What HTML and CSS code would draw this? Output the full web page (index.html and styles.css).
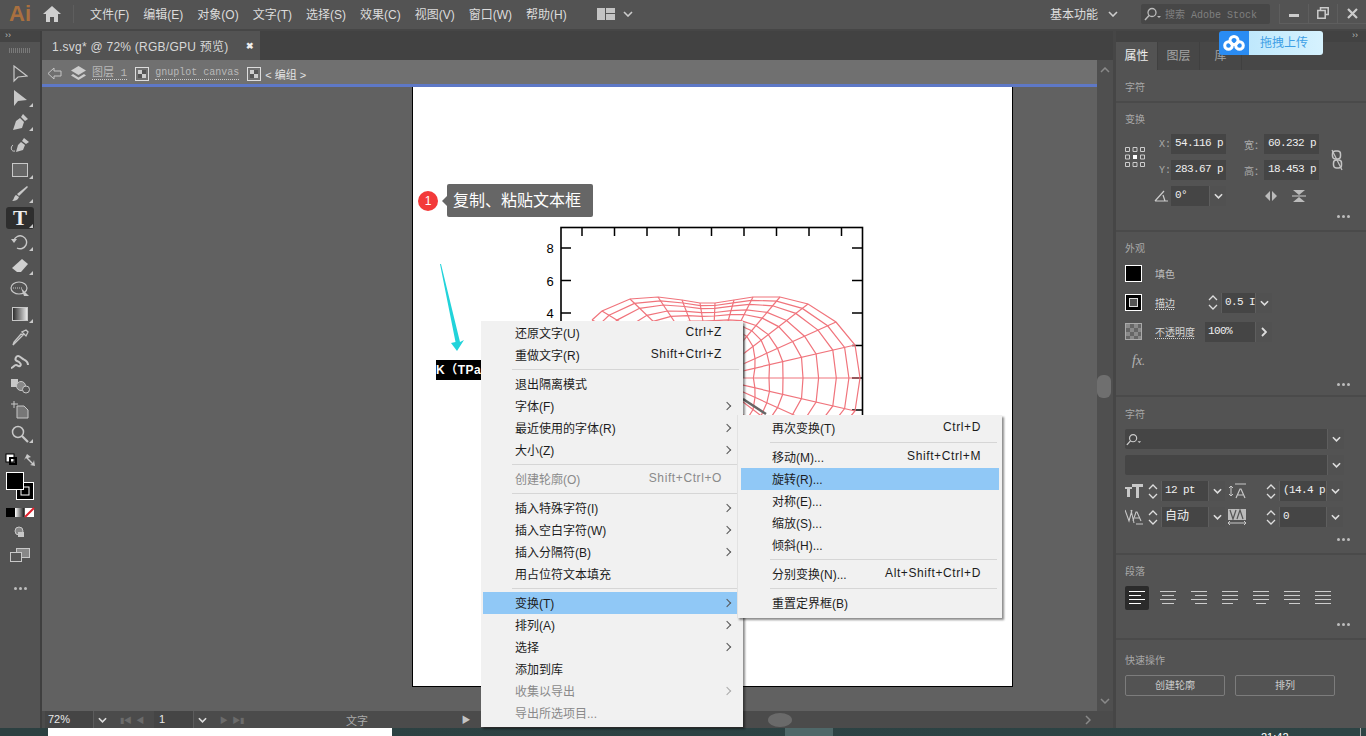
FILE: index.html
```html
<!DOCTYPE html>
<html>
<head>
	<title>Ai</title>
	<meta charset="utf-8">
	<link rel="stylesheet" href="styles.css">
</head>
<body>
	<div class="topbar">
		<span class="logo">Ai</span>
		<svg class="home" width="18" height="16" viewBox="0 0 18 16"><path d="M9 0 0 8h3v8h4v-5h4v5h4V8h3z" fill="#d0d0d0"/></svg>
		<i class="vline"></i>
		<ul class="menus">
			<li>文件(F)</li><li>编辑(E)</li><li>对象(O)</li><li>文字(T)</li><li>选择(S)</li><li>效果(C)</li><li>视图(V)</li><li>窗口(W)</li><li>帮助(H)</li>
		</ul>
		<svg class="layout" width="18" height="12" viewBox="0 0 18 12"><path d="M0 0h8v12H0zM9 0h9v5H9zM9 6h9v6H9z" fill="#c4c4c4"/></svg>
		<svg class="chev" width="10" height="6" viewBox="0 0 10 6"><path d="M1 1l4 4 4-4" fill="none" stroke="#ccc" stroke-width="1.6"/></svg>
		<span class="spring"></span>
		<span class="workspace">基本功能</span>
		<svg class="chev" width="10" height="6" viewBox="0 0 10 6"><path d="M1 1l4 4 4-4" fill="none" stroke="#ccc" stroke-width="1.6"/></svg>
		<div class="stock">
			<svg width="18" height="14" viewBox="0 0 18 14"><circle cx="8" cy="5.500" r="4" fill="none" stroke="#bbb" stroke-width="1.300"/><path d="M5 8.500 1 13" stroke="#bbb" stroke-width="1.500"/><path d="M13 9h4l-2 2z" fill="#bbb"/></svg>
			<span>搜索 Adobe Stock</span>
		</div>
		<div class="winbtns">
			<span><i class="win-min"></i></span>
			<span><svg width="12" height="12" viewBox="0 0 12 12"><path d="M3.500 3V.8h7.700v6.700H8.500M.8 3.500h7.400v7.700H.8z" fill="none" stroke="#ccc" stroke-width="1.500"/></svg></span>
			<span><svg width="11" height="11" viewBox="0 0 11 11"><path d="M1 1l9 9M10 1l-9 9" stroke="#ccc" stroke-width="2.200"/></svg></span>
		</div>
	</div>

	<div class="work">
		<div class="tools">
			<div class="tools-head">››</div>
			<div class="grip"></div>
			<div class="tool"><svg width="16" height="18" viewBox="0 0 16 18"><path d="M2 1v15l4-4 9-1z" fill="none" stroke="#c8c8c8" stroke-width="1.200"/></svg></div>
			<div class="tool more"><svg width="16" height="18" viewBox="0 0 16 18"><path d="M2 1v16l4-5 9-1z" fill="#c8c8c8"/></svg></div>
			<div class="tool more"><svg width="18" height="18" viewBox="0 0 18 18"><path d="M12 1l5 5-3 2-4-4zM9 5l4 4-2 6-9 2 3-9z" fill="#c8c8c8"/></svg></div>
			<div class="tool"><svg width="20" height="18" viewBox="0 0 20 18"><path d="M14 1l5 4-3 2-4-3zM11 5l4 3-2 5-7 2 2-7z" fill="#c8c8c8"/><path d="M5 14C1 15 0 10 3 8" fill="none" stroke="#c8c8c8"/></svg></div>
			<div class="tool more"><svg width="16" height="14" viewBox="0 0 16 14"><rect x=".5" y=".5" width="15" height="13" fill="#666" stroke="#c8c8c8"/></svg></div>
			<div class="tool more"><svg width="18" height="18" viewBox="0 0 18 18"><path d="M16 1 17 2 8 11 6 9zM5 10l3 2c-1 3-4 4-7 4 2-1 2-5 4-6z" fill="#c8c8c8"/></svg></div>
			<div class="tool active more"><span class="t">T</span></div>
			<div class="tool more"><svg width="18" height="16" viewBox="0 0 18 16"><path d="M3 6a6.500 6.500 0 1 1 3 8" fill="none" stroke="#c8c8c8" stroke-width="1.400"/><path d="M0 5h6L3 9z" fill="#c8c8c8"/></svg></div>
			<div class="tool more"><svg width="18" height="16" viewBox="0 0 18 16"><path d="M11 1l6 5-7 8H6L1 10z" fill="#d0d0d0"/></svg></div>
			<div class="tool"><svg width="20" height="18" viewBox="0 0 20 18"><ellipse cx="9" cy="7" rx="8" ry="6" fill="none" stroke="#c8c8c8" stroke-width="1.200"/><path d="M3 7h9" stroke="#c8c8c8" stroke-dasharray="1 1"/><path d="M11 7l8 8-5 0z" fill="#c8c8c8"/></svg></div>
			<div class="tool more"><span class="grad"></span></div>
			<div class="tool"><svg width="18" height="18" viewBox="0 0 18 18"><path d="M12 6 4 14l-2 2 1-3 7-8zM11 3l4 4 2-4-2-2z" fill="none" stroke="#c8c8c8" stroke-width="1.300"/></svg></div>
			<div class="tool"><svg width="20" height="14" viewBox="0 0 20 14"><path d="M1 13c2 0 3-3 5-3s2 2 4 1 0-4-3-5-1-5 1-5 3 2 5 3 5 2 5 6" fill="none" stroke="#c8c8c8" stroke-width="2"/></svg></div>
			<div class="tool"><svg width="19" height="15" viewBox="0 0 19 15"><rect x="0" y="0" width="7" height="8" fill="#c8c8c8"/><circle cx="10" cy="7" r="4.500" fill="#888" stroke="#c8c8c8"/><circle cx="15" cy="10.500" r="3.500" fill="#555" stroke="#c8c8c8"/></svg></div>
			<div class="tool"><svg width="18" height="18" viewBox="0 0 18 18"><path d="M6 5h7l4 4v8H6z" fill="#777" stroke="#c8c8c8"/><path d="M3 0v7M0 3h7" stroke="#c8c8c8"/></svg></div>
			<div class="tool more"><svg width="18" height="18" viewBox="0 0 18 18"><circle cx="7" cy="7" r="5.500" fill="none" stroke="#c8c8c8" stroke-width="1.500"/><path d="M11 11l6 6" stroke="#c8c8c8" stroke-width="2.200"/></svg></div>
			<svg class="colors" width="40" height="94" viewBox="0 0 40 94">
				<rect x="6" y="1" width="8" height="8" fill="#fff" stroke="#000"/><rect x="10" y="5" width="6" height="6" fill="none" stroke="#000" stroke-width="2"/>
				<path d="M27 1l4 3-3 1 5 5 1-3 1 6-5-1 2-1-6-6-2 2z" fill="#c8c8c8"/>
				<rect x="16.500" y="29.500" width="17" height="17" fill="#000" stroke="#fff"/><rect x="21" y="34" width="8" height="8" fill="none" stroke="#fff"/>
				<rect x="6.500" y="19.500" width="17" height="17" fill="#000" stroke="#fff"/>
				<rect x="6" y="55" width="9" height="9" fill="#000"/><rect x="15" y="55" width="9" height="9" fill="url(#bw)"/><rect x="25" y="55" width="9" height="9" fill="#fff"/><path d="M25 64l9-9" stroke="#e0202c" stroke-width="2"/>
				<defs><linearGradient id="bw"><stop offset="0" stop-color="#fff"/><stop offset="1" stop-color="#222"/></linearGradient></defs>
				<circle cx="19" cy="78" r="4" fill="#888" stroke="#c8c8c8"/><rect x="18" y="79" width="6" height="5" fill="#c8c8c8"/>
			</svg>
			<svg class="screen" width="20" height="14" viewBox="0 0 20 14"><rect x="6.500" y=".5" width="13" height="9" fill="#888" stroke="#c8c8c8"/><rect x=".5" y="4.500" width="11" height="9" fill="#555" stroke="#c8c8c8"/></svg>
			<div class="dots tool-dots"><i></i><i></i><i></i></div>
		</div>

		<div class="center">
			<div class="tabstrip">
				<div class="doctab"><span>1.svg* @ 72% (RGB/GPU 预览)</span><b>✖</b></div>
			</div>
			<div class="crumbs">
				<svg class="back" width="15" height="13" viewBox="0 0 15 13"><path d="M7 1 1 6.500 7 12V9h7V4H7z" fill="none" stroke="#c4c4c4"/></svg>
				<svg class="layers" width="15" height="15" viewBox="0 0 15 15"><path d="M7.500 0 15 4.500 7.500 9 0 4.500z" fill="#ccc"/><path d="M2 8 0 9.500 7.500 14 15 9.500 13 8l-5.500 3.500z" fill="#ccc"/></svg>
				<span class="dotted layer-name">图层 1</span>
				<i class="thumb"></i>
				<span class="dotted mono">gnuplot canvas</span>
				<i class="thumb"></i>
				<span class="group">&lt; 编组 &gt;</span>
			</div>
			<div class="bluebar"></div>
			<div class="mid">
				<div class="canvas">
					<div class="artboard">
						<svg class="art" width="599" height="599" viewBox="413 87 599 599">
							<path d="M440 264 441 264 460 342 464 340 457 351 451 343 455.500 342z" fill="#22d3da"/>
							<rect x="561" y="227.500" width="301.500" height="340" fill="none" stroke="#000" stroke-width="1.600"/>
							<g id="ticks" stroke="#000" stroke-width="1.500">
								<path d="M582 227v9M614.500 227v9M647 227v9M679 227v9M711.500 227v9M744 227v9M776.500 227v9M809 227v9M841.500 227v9"/>
								<path d="M561 248h10M561 280.500h10M561 313h10M561 345.500h10M561 378h10M852 248h10M852 280.500h10M852 313h10M852 345.500h10M852 378h10M852 410h10"/>
							</g>
							<g class="axis">
								<text x="550" y="253">8</text>
								<text x="550" y="285.500">6</text>
								<text x="550" y="318">4</text>
							</g>
							<g id="mesh" fill="none" stroke="#f0747c" stroke-width="1.200"></g>
							<path d="M743.500 326v52" stroke="#999" stroke-width="2" opacity=".8"/>
							<path d="M743 399 766 414" stroke="#666" stroke-width="2.500"/>
						</svg>
						<div class="callout">
							<span class="num">1</span>
							<span class="tip">复制、粘贴文本框</span>
						</div>
						<div class="seltext">K（TPa）</div>
					</div>
				</div>
				<div class="vscroll">
					<svg width="10" height="6" viewBox="0 0 10 6"><path d="M1 5l4-4 4 4" fill="none" stroke="#8a8a8a" stroke-width="1.500"/></svg>
					<i class="vthumb"></i>
					<svg width="10" height="6" viewBox="0 0 10 6"><path d="M1 1l4 4 4-4" fill="none" stroke="#8a8a8a" stroke-width="1.500"/></svg>
				</div>
			</div>
			<div class="status">
				<span class="zoomval">72%</span>
				<span class="dd"><svg width="9" height="6" viewBox="0 0 10 6"><path d="M1 1l4 4 4-4" fill="none" stroke="#ddd" stroke-width="1.800"/></svg></span>
				<span class="nav">▮◀ &nbsp;◀</span>
				<span class="pageval">1</span>
				<span class="dd"><svg width="9" height="6" viewBox="0 0 10 6"><path d="M1 1l4 4 4-4" fill="none" stroke="#ddd" stroke-width="1.800"/></svg></span>
				<span class="nav">▶ &nbsp;▶▮</span>
				<span class="mode">文字</span>
				<span class="play">▶</span>
				<span class="hscroll"><i class="hthumb"></i></span>
				<svg class="hnext" width="6" height="10" viewBox="0 0 6 10"><path d="M1 1l4 4-4 4" fill="none" stroke="#8a8a8a" stroke-width="1.500"/></svg>
			</div>
		</div>

		<div class="panel">
			<div class="panel-head">››</div>
			<div class="panel-tabs">
				<span class="on">属性</span><span>图层</span><span>库</span>
			</div>
			<section class="sec s-title"><h4>字符</h4></section>
			<section class="sec s-transform">
				<h4>变换</h4>
				<div class="tf-grid">
					<svg class="refpoint" width="20" height="20" viewBox="0 0 20 20"><g fill="none" stroke="#ccc"><path d="M.5.5h4v4h-4zM8 .5h4v4H8zM15.500.5h4v4h-4zM.5 8h4v4h-4zM15.500 8h4v4h-4zM.5 15.500h4v4h-4zM8 15.500h4v4H8zM15.500 15.500h4v4h-4z"/></g><rect x="8" y="8" width="4" height="4" fill="#fff"/></svg>
					<div class="tf-fields">
						<label>X:</label><span class="num-field">54.116 p</span>
						<label class="cjk">宽：</label><span class="num-field">60.232 p</span>
						<svg class="link" width="16" height="22" viewBox="0 0 16 22"><path d="M3 1l10 20" stroke="#c4c4c4" stroke-width="1.200"/><rect x="3.500" y="2" width="8" height="8" rx="3" fill="none" stroke="#c4c4c4" stroke-width="1.500"/><rect x="4.500" y="11" width="8" height="8" rx="3" fill="none" stroke="#c4c4c4" stroke-width="1.500"/></svg>
						<label>Y:</label><span class="num-field">283.67 p</span>
						<label class="cjk">高：</label><span class="num-field">18.453 p</span>
						<svg class="angle" width="15" height="12" viewBox="0 0 15 12"><path d="M1 11h13M1 11 10 1M9 5l2 6" fill="none" stroke="#ccc" stroke-width="1.200"/></svg>
						<span class="num-field combo">0°<b class="ddb"><svg width="9" height="6" viewBox="0 0 10 6"><path d="M1 1l4 4 4-4" fill="none" stroke="#ddd" stroke-width="1.800"/></svg></b></span>
						<span></span>
						<div class="flips">
							<svg width="14" height="12" viewBox="0 0 14 12"><path d="M6 1 1 6l5 5zM8 1l5 5-5 5z" fill="#bbb"/></svg>
							<svg width="14" height="14" viewBox="0 0 14 14"><path d="M1 1h12L7 6zM1 13h12L7 8z" fill="#bbb"/><path d="M0 7h14" stroke="#ccc"/></svg>
						</div>
					</div>
				</div>
				<div class="dots"><i></i><i></i><i></i></div>
			</section>
			<section class="sec s-look">
				<h4>外观</h4>
				<div class="look-row">
					<i class="swatch"></i><span class="lbl">填色</span>
				</div>
				<div class="look-row">
					<i class="swatch stroke"><i></i></i><span class="lbl under">描边</span>
					<span class="ctrl"><b class="step"><svg width="10" height="15" viewBox="0 0 10 15"><path d="M1 5l4-4 4 4M1 10l4 4 4-4" fill="none" stroke="#ddd" stroke-width="1.300"/></svg></b><span class="val w33">0.5 I</span><b class="ddb"><svg width="9" height="6" viewBox="0 0 10 6"><path d="M1 1l4 4 4-4" fill="none" stroke="#ddd" stroke-width="1.800"/></svg></b></span>
				</div>
				<div class="look-row">
					<i class="swatch opac"></i><span class="lbl under">不透明度</span>
					<span class="ctrl opac-ctrl"><span class="val w50">100%</span><b class="ddb"><svg width="6" height="10" viewBox="0 0 6 10"><path d="M1 1l4 4-4 4" fill="none" stroke="#ddd" stroke-width="1.800"/></svg></b></span>
				</div>
				<div class="fx">fx<small>.</small></div>
				<div class="dots"><i></i><i></i><i></i></div>
			</section>
			<section class="sec s-char">
				<h4>字符</h4>
				<div class="sel"><svg width="16" height="13" viewBox="0 0 18 14"><circle cx="8" cy="5.500" r="4" fill="none" stroke="#ccc" stroke-width="1.300"/><path d="M5 8.500 1 13" stroke="#ccc" stroke-width="1.500"/><path d="M13 9h4l-2 2z" fill="#ccc"/></svg><b class="ddb"><svg width="9" height="6" viewBox="0 0 10 6"><path d="M1 1l4 4 4-4" fill="none" stroke="#ddd" stroke-width="1.800"/></svg></b></div>
				<div class="sel"><b class="ddb"><svg width="9" height="6" viewBox="0 0 10 6"><path d="M1 1l4 4 4-4" fill="none" stroke="#ddd" stroke-width="1.800"/></svg></b></div>
				<div class="char-grid">
					<svg width="18" height="16" viewBox="0 0 18 16"><path d="M0 4h7v2H5v8H2V6H0zM7 1h11v3h-4v11h-3V4H7z" fill="#c8c8c8"/></svg>
					<span class="ctrl"><b class="step"><svg width="10" height="15" viewBox="0 0 10 15"><path d="M1 5l4-4 4 4M1 10l4 4 4-4" fill="none" stroke="#ddd" stroke-width="1.300"/></svg></b><span class="val w46">12 pt</span><b class="ddb"><svg width="9" height="6" viewBox="0 0 10 6"><path d="M1 1l4 4 4-4" fill="none" stroke="#ddd" stroke-width="1.800"/></svg></b></span>
					<svg width="18" height="18" viewBox="0 0 18 18"><path d="M8 16l4-9h1l4 9M10 13h5" fill="none" stroke="#c8c8c8" stroke-width="1.200"/><path d="M7 2h11M3 4v10M1 6l2-2 2 2M1 12l2 2 2-2" fill="none" stroke="#c8c8c8"/></svg>
					<span class="ctrl"><b class="step"><svg width="10" height="15" viewBox="0 0 10 15"><path d="M1 5l4-4 4 4M1 10l4 4 4-4" fill="none" stroke="#ddd" stroke-width="1.300"/></svg></b><span class="val w46">(14.4 p</span><b class="ddb"><svg width="9" height="6" viewBox="0 0 10 6"><path d="M1 1l4 4 4-4" fill="none" stroke="#ddd" stroke-width="1.800"/></svg></b></span>
					<svg width="18" height="17" viewBox="0 0 18 17"><path d="M0 1l4 11 3-11M9 14 6 1M8 12l3-9h1l4 9M10 9h5" fill="none" stroke="#c8c8c8" stroke-width="1.100"/><path d="M11 15h7" stroke="#c8c8c8"/></svg>
					<span class="ctrl"><b class="step"><svg width="10" height="15" viewBox="0 0 10 15"><path d="M1 5l4-4 4 4M1 10l4 4 4-4" fill="none" stroke="#ddd" stroke-width="1.300"/></svg></b><span class="val w46 cjkval">自动</span><b class="ddb"><svg width="9" height="6" viewBox="0 0 10 6"><path d="M1 1l4 4 4-4" fill="none" stroke="#ddd" stroke-width="1.800"/></svg></b></span>
					<svg width="18" height="17" viewBox="0 0 18 17"><rect width="18" height="11" fill="#bbb"/><path d="M2 1l3 9 3-9M9 10l3-9 3 9" fill="none" stroke="#555" stroke-width="1.200"/><path d="M0 14h18M0 14l2-2M0 14l2 2M18 14l-2-2M18 14l-2 2" fill="none" stroke="#c8c8c8"/></svg>
					<span class="ctrl"><b class="step"><svg width="10" height="15" viewBox="0 0 10 15"><path d="M1 5l4-4 4 4M1 10l4 4 4-4" fill="none" stroke="#ddd" stroke-width="1.300"/></svg></b><span class="val w46">0</span><b class="ddb"><svg width="9" height="6" viewBox="0 0 10 6"><path d="M1 1l4 4 4-4" fill="none" stroke="#ddd" stroke-width="1.800"/></svg></b></span>
				</div>
				<div class="dots"><i></i><i></i><i></i></div>
			</section>
			<section class="sec s-para">
				<h4>段落</h4>
				<div class="aligns">
					<span class="on"><svg width="16" height="14" viewBox="0 0 16 14"><path d="M0 .5h16M0 4.500h12M0 8.500h16M0 12.500h12" stroke="#fff"/></svg></span>
					<span><svg width="16" height="14" viewBox="0 0 16 14"><path d="M0 .5h16M2 4.500h12M0 8.500h16M2 12.500h12" stroke="#ccc"/></svg></span>
					<span><svg width="16" height="14" viewBox="0 0 16 14"><path d="M0 .5h16M4 4.500h12M0 8.500h16M4 12.500h12" stroke="#ccc"/></svg></span>
					<span><svg width="16" height="14" viewBox="0 0 16 14"><path d="M0 .5h16M0 4.500h16M0 8.500h16M0 12.500h11" stroke="#ccc"/></svg></span>
					<span><svg width="16" height="14" viewBox="0 0 16 14"><path d="M0 .5h16M0 4.500h16M0 8.500h16M3 12.500h10" stroke="#ccc"/></svg></span>
					<span><svg width="16" height="14" viewBox="0 0 16 14"><path d="M0 .5h16M0 4.500h16M0 8.500h16M5 12.500h11" stroke="#ccc"/></svg></span>
					<span><svg width="16" height="14" viewBox="0 0 16 14"><path d="M0 .5h16M0 4.500h16M0 8.500h16M0 12.500h16" stroke="#ccc"/></svg></span>
				</div>
				<div class="dots"><i></i><i></i><i></i></div>
			</section>
			<section class="sec s-quick">
				<h4>快速操作</h4>
				<div class="quick-btns">
					<span>创建轮廓</span><span>排列</span>
				</div>
			</section>
		</div>
	</div>

	<div class="taskbar">
		<i class="tb-white"></i>
		<i class="tb-active"></i>
		<span class="clock">21:42</span>
		<i class="tb-end"></i>
	</div>

	<div class="upload">
		<span class="up-ico"><svg width="22" height="16" viewBox="0 0 22 16"><g fill="none" stroke="#fff" stroke-width="3"><circle cx="11" cy="5.500" r="4"/><circle cx="5.500" cy="10.500" r="3.800"/><circle cx="16.500" cy="10.500" r="3.800"/></g></svg></span>
		<span class="up-txt">拖拽上传</span>
	</div>

	<div class="ctx main-menu">
		<div class="row"><span>还原文字(U)</span><em>Ctrl+Z</em></div>
		<div class="row"><span>重做文字(R)</span><em>Shift+Ctrl+Z</em></div>
		<hr>
		<div class="row"><span>退出隔离模式</span></div>
		<div class="row sub"><span>字体(F)</span></div>
		<div class="row sub"><span>最近使用的字体(R)</span></div>
		<div class="row sub"><span>大小(Z)</span></div>
		<hr>
		<div class="row off"><span>创建轮廓(O)</span><em>Shift+Ctrl+O</em></div>
		<hr>
		<div class="row sub"><span>插入特殊字符(I)</span></div>
		<div class="row sub"><span>插入空白字符(W)</span></div>
		<div class="row sub"><span>插入分隔符(B)</span></div>
		<div class="row"><span>用占位符文本填充</span></div>
		<hr>
		<div class="row sub hi"><span>变换(T)</span></div>
		<div class="row sub"><span>排列(A)</span></div>
		<div class="row sub"><span>选择</span></div>
		<div class="row"><span>添加到库</span></div>
		<div class="row sub off"><span>收集以导出</span></div>
		<div class="row off"><span>导出所选项目...</span></div>
	</div>

	<div class="ctx sub-menu">
		<div class="row"><span>再次变换(T)</span><em>Ctrl+D</em></div>
		<hr>
		<div class="row"><span>移动(M)...</span><em>Shift+Ctrl+M</em></div>
		<div class="row hi"><span>旋转(R)...</span></div>
		<div class="row"><span>对称(E)...</span></div>
		<div class="row"><span>缩放(S)...</span></div>
		<div class="row"><span>倾斜(H)...</span></div>
		<hr>
		<div class="row"><span>分别变换(N)...</span><em>Alt+Shift+Ctrl+D</em></div>
		<hr>
		<div class="row"><span>重置定界框(B)</span></div>
	</div>

	<script src="mesh.js"></script>
</body>
</html>
```

FILE: styles.css
```css
*{
	margin:0;
	padding:0;
	box-sizing:border-box;
}
body{
	width:1366px;
	height:736px;
	overflow:hidden;
	display:flex;
	flex-direction:column;
	position:relative;
	background:#535353;
	font-family:"Liberation Sans","Noto Sans CJK SC",sans-serif;
	font-size:12px;
	color:#ddd;
}
i,em{
	font-style:normal;
}
ul{
	list-style:none;
}

/* top bar */
.topbar{
	height:31px;
	flex:none;
	display:flex;
	align-items:center;
	background:#535353;
	border-bottom:2px solid #464646;
	padding-bottom:2px;
}
.logo{
	width:27px;
	margin-left:9px;
	font-size:22px;
	font-weight:bold;
	color:#a9703f;
}
.home{
	margin-left:7px;
}
.vline{
	width:1px;
	height:18px;
	margin:0 16px 0 12px;
	background:#5e5e5e;
}
.menus{
	display:flex;
	gap:14px;
	color:#dcdcdc;
}
.layout{
	margin-left:30px;
}
.topbar .chev{
	margin-left:8px;
}
.spring{
	flex:1;
}
.workspace{
	color:#ddd;
}
.topbar .workspace + .chev{
	margin-left:10px;
}
.stock{
	width:129px;
	height:20px;
	margin-left:23px;
	display:flex;
	align-items:center;
	gap:3px;
	padding-left:3px;
	background:#474747;
	border-radius:2px;
	font-family:"Liberation Mono","Noto Sans CJK SC",monospace;
	font-size:10px;
	color:#808080;
}
.winbtns{
	display:flex;
	margin-left:9px;
	width:87px;
}
.winbtns span{
	flex:1;
	height:20px;
	display:flex;
	align-items:center;
	justify-content:center;
	border-left:1px solid #5e5e5e;
	border-bottom:1px solid #5e5e5e;
}
.win-min{
	width:10px;
	height:3px;
	margin-top:5px;
	background:#ccc;
}

/* main row */
.work{
	flex:1;
	display:flex;
	min-height:0;
}

/* tool column */
.tools{
	width:42px;
	flex:none;
	background:#535353;
	border-right:2px solid #3f3f3f;
}
.tools-head{
	height:11px;
	background:#444;
	font-size:9px;
	line-height:9px;
	padding-left:5px;
	color:#bbb;
}
.grip{
	height:17px;
	margin:3px 9px 0;
	background:repeating-linear-gradient(90deg,#7a7a7a 0 1px,transparent 1px 2px) center 3px/100% 5px no-repeat;
}
.tool{
	height:24px;
	width:40px;
	display:flex;
	align-items:center;
	justify-content:center;
	position:relative;
}
.tool.active{
	width:28px;
	height:22px;
	margin:1px 6px;
	background:#2e2e2e;
	border-radius:3px;
}
.tool.more:after{
	content:"";
	position:absolute;
	right:7px;
	bottom:3px;
	border-left:4px solid transparent;
	border-bottom:4px solid #c8c8c8;
}
.tool.active:after{
	right:1px;
	bottom:1px;
}
.t{
	font-family:"Liberation Serif",serif;
	font-size:21px;
	font-weight:bold;
	color:#eee;
	line-height:22px;
}
.grad{
	width:16px;
	height:14px;
	border:1px solid #c8c8c8;
	background:linear-gradient(90deg,#2e2e2e,#e8e8e8);
}
.colors{
	display:block;
	margin-top:7px;
}
.screen{
	display:block;
	margin:1px 0 0 10px;
}
.dots{
	display:flex;
	justify-content:flex-end;
	gap:2px;
}
.dots i{
	width:3px;
	height:3px;
	border-radius:50%;
	background:#bdbdbd;
}
.tool-dots{
	justify-content:center;
	margin-top:25px;
}

/* document area */
.center{
	flex:1;
	min-width:0;
	display:flex;
	flex-direction:column;
}
.tabstrip{
	height:29px;
	flex:none;
	background:#424242;
}
.doctab{
	width:218px;
	height:29px;
	display:flex;
	align-items:center;
	justify-content:space-between;
	padding:0 6px 0 10px;
	background:#535353;
	color:#d8d8d8;
	letter-spacing:.25px;
}
.doctab b{
	font-size:9px;
	color:#eee;
}
.crumbs{
	height:24px;
	flex:none;
	display:flex;
	align-items:center;
	padding:3px 0 0 5px;
	background:#707070;
	font-size:11px;
	color:#b8b8b8;
}
.back{
	margin-right:9px;
}
.layers{
	margin-right:6px;
}
.dotted{
	border-bottom:1px dotted #ccc;
	line-height:12px;
}
.layer-name{
	font-family:"Liberation Mono","Noto Sans CJK SC",monospace;
}
.mono{
	font-family:"Liberation Mono",monospace;
	font-size:10px;
}
.thumb{
	width:14px;
	height:14px;
	margin:0 6px 0 8px;
	border:1px solid #ddd;
	background:linear-gradient(90deg,#ccc 50%,#555 50%) 2px 2px/8px 4px no-repeat,linear-gradient(90deg,#555 50%,#ccc 50%) 2px 6px/8px 4px no-repeat;
}
.group{
	margin-left:-2px;
	color:#e4e4e4;
}
.bluebar{
	height:3px;
	flex:none;
	background:#5e78c6;
	margin-right:16px;
	position:relative;
	z-index:1;
}
.mid{
	flex:1;
	min-height:0;
	display:flex;
	margin-top:-27px;
}
.canvas{
	flex:1;
	margin-top:27px;
	position:relative;
	background:#616161;
}
.artboard{
	position:absolute;
	left:370px;
	top:-1px;
	width:601px;
	height:601px;
	background:#fff;
	border:1px solid #000;
}
.art{
	display:block;
}
.axis text{
	font-size:13px;
	fill:#000;
	text-anchor:middle;
}
.callout{
	position:absolute;
	left:5px;
	top:97px;
	display:flex;
	align-items:center;
}
.num{
	width:20px;
	height:20px;
	margin-right:9px;
	border-radius:50%;
	background:#f33a3a;
	color:#fff;
	text-align:center;
	line-height:20px;
	font-size:12px;
}
.tip{
	position:relative;
	height:33px;
	padding:0 12px 0 6px;
	line-height:33px;
	border-radius:2px;
	background:#666;
	color:#fff;
	font-size:16px;
}
.tip:before{
	content:"";
	position:absolute;
	left:-5px;
	top:12px;
	border-top:5px solid transparent;
	border-bottom:5px solid transparent;
	border-right:5px solid #666;
}
.seltext{
	position:absolute;
	left:23px;
	top:273px;
	height:20px;
	white-space:nowrap;
	background:#000;
	color:#fff;
	font-weight:bold;
	letter-spacing:.5px;
	line-height:20px;
}
.vscroll{
	width:16px;
	flex:none;
	display:flex;
	flex-direction:column;
	align-items:center;
	justify-content:space-between;
	padding:7px 0 7px;
	background:#4f4f4f;
	position:relative;
}
.vthumb{
	position:absolute;
	left:0;
	top:315px;
	width:14px;
	height:23px;
	border-radius:6px;
	background:#6f6f6f;
}

/* status line */
.status{
	height:17px;
	flex:none;
	display:flex;
	align-items:center;
	padding-left:3px;
	background:#4b4b4b;
	font-size:11px;
	color:#e8e8e8;
}
.zoomval{
	width:48px;
	line-height:17px;
	padding-left:3px;
	background:#454545;
}
.dd{
	width:17px;
	height:17px;
	display:flex;
	align-items:center;
	justify-content:center;
	border-left:1px solid #5c5c5c;
}
.nav{
	width:44px;
	font-size:8px;
	color:#6b6b6b;
	text-align:center;
	white-space:nowrap;
}
.pageval{
	width:39px;
	line-height:17px;
	padding-left:5px;
	background:#454545;
}
.mode{
	width:200px;
	text-align:center;
	padding-left:6px;
	color:#aaa;
}
.play{
	width:24px;
	font-size:9px;
	color:#c4c4c4;
	text-align:center;
}
.hscroll{
	flex:1;
	padding-left:290px;
	height:17px;
	display:flex;
	align-items:center;
}
.hthumb{
	width:24px;
	height:14px;
	border-radius:50%;
	background:#6a6a6a;
}
.hnext{
	margin-right:22px;
}

/* properties panel */
.panel{
	width:253px;
	flex:none;
	background:#535353;
	border-left:3px solid #464646;
	display:flex;
	flex-direction:column;
}
.panel-head{
	height:11px;
	flex:none;
	background:#424242;
	text-align:right;
	padding-right:8px;
	font-size:9px;
	line-height:9px;
	color:#bbb;
}
.panel-tabs{
	height:28px;
	flex:none;
	display:flex;
	background:#474747;
	color:#a4a4a4;
}
.panel-tabs span{
	width:42px;
	text-align:center;
	line-height:29px;
	border-right:1px solid #404040;
}
.panel-tabs .on{
	background:#535353;
	color:#eee;
}
.sec{
	flex:none;
	padding:0 9px;
	border-bottom:2px solid #4a4a4a;
}
.sec h4{
	font-size:10px;
	font-weight:normal;
	color:#a8a8a8;
	line-height:14px;
	padding-top:10px;
	height:24px;
}
.s-title{
	height:33px;
}
.s-title h4{
	padding-top:11px;
}
.s-transform{
	height:129px;
}
.s-look{
	height:165px;
}
.s-look h4{
	height:27px;
}
.s-char{
	height:158px;
}
.s-char h4{
	height:32px;
	padding-top:11px;
}
.s-para{
	height:85px;
}
.s-para h4{
	height:28px;
}
.s-quick{
	flex:1;
	border-bottom:0;
}
.s-quick h4{
	padding-top:14px;
	height:35px;
}
.sec .dots{
	padding-right:7px;
}
.tf-grid{
	display:flex;
	height:88px;
}
.refpoint{
	margin:20px 0 0 0;
	flex:none;
}
.tf-fields{
	margin:7px 0 0 14px;
	display:grid;
	height:72px;
	grid-template-columns:12px 55px 38px 55px 28px;
	grid-template-rows:20px 20px 20px;
	row-gap:6px;
	align-items:center;
}
.tf-fields label{
	font-family:"Liberation Mono",monospace;
	font-size:10px;
	color:#aaa;
}
.tf-fields .cjk{
	font-family:inherit;
	text-align:right;
	font-size:10px;
	white-space:nowrap;
}
.num-field,.val{
	height:20px;
	line-height:19px;
	background:#454545;
	font-family:"Liberation Mono","Noto Sans CJK SC",monospace;
	font-size:11px;
	letter-spacing:-.6px;
	color:#f0f0f0;
}
.num-field{
	padding-left:4px;
	white-space:nowrap;
}
.link{
	grid-column:5;
	grid-row:1 / span 2;
	margin:6px 0 0 10px;
}
.angle{
	margin-left:-5px;
}
.combo{
	display:flex;
	justify-content:space-between;
	padding-right:0;
}
.ddb{
	width:17px;
	height:100%;
	flex:none;
	display:flex;
	align-items:center;
	justify-content:center;
	background:#515151;
	border-left:1px solid #5e5e5e;
}
.flips{
	display:flex;
	align-items:center;
	gap:14px;
	grid-column:4;
}
.look-row{
	height:29px;
	display:flex;
	align-items:center;
}
.swatch{
	width:17px;
	height:17px;
	flex:none;
	background:#000;
	border:1px solid #fff;
	display:flex;
	align-items:center;
	justify-content:center;
}
.swatch.stroke i{
	width:9px;
	height:9px;
	background:#555;
	border:1px solid #ddd;
}
.swatch.opac{
	border-color:#aaa;
	background:repeating-conic-gradient(#666 0 25%,#8a8a8a 0 50%) 0 0/8px 8px;
}
.lbl{
	margin-left:13px;
	font-size:10px;
	color:#bcbcbc;
	width:50px;
}
.under{
	color:#d4d4d4;
	text-decoration:underline dotted;
	text-underline-offset:2px;
}
.ctrl{
	display:flex;
	height:20px;
	flex:none;
}
.step{
	width:17px;
	height:100%;
	display:flex;
	align-items:center;
	justify-content:center;
	border-right:1px solid #5e5e5e;
	flex:none;
}
.val{
	display:block;
	padding-left:3px;
	white-space:nowrap;
	overflow:hidden;
}
.w33{
	width:33px;
}
.w46{
	width:46px;
}
.w50{
	width:50px;
}
.cjkval{
	font-family:"Liberation Sans","Noto Sans CJK SC",sans-serif;
	font-size:12px;
	letter-spacing:0;
}
.fx{
	height:29px;
	padding:7px 0 0 7px;
	font-family:"Liberation Serif",serif;
	font-style:italic;
	font-size:14px;
	color:#b4b4b4;
}
.s-look .dots{
	margin-top:8px;
}
.sel{
	width:219px;
	height:20px;
	margin-bottom:6px;
	display:flex;
	align-items:center;
	justify-content:space-between;
	padding-left:1px;
	background:#454545;
	border-radius:2px;
}
.sel .ddb:only-child{
	margin-left:auto;
}
.char-grid{
	display:grid;
	grid-template-columns:20px 83px 35px 81px;
	gap:6px 0;
	width:219px;
	align-items:center;
	margin-top:2px;
}
.s-char .dots{
	margin-top:11px;
}
.aligns{
	display:flex;
	gap:7px;
	height:24px;
	margin-top:3px;
	margin-bottom:13px;
}
.aligns span{
	width:24px;
	height:24px;
	display:flex;
	align-items:center;
	justify-content:center;
	border-radius:2px;
}
.aligns .on{
	background:#2b2b2b;
}
.quick-btns{
	display:flex;
	gap:10px;
}
.quick-btns span{
	width:100px;
	height:21px;
	text-align:center;
	line-height:19px;
	font-size:10px;
	color:#ccc;
	border:1px solid #7c7c7c;
	border-radius:2px;
}

/* task bar, mostly cut off by the window */
.taskbar{
	height:8px;
	flex:none;
	display:flex;
	background:linear-gradient(90deg,#2c4041,#2d4445);
	overflow:hidden;
}
.tb-white{
	width:344px;
	margin-left:48px;
	background:#fff;
}
.tb-active{
	width:48px;
	margin-left:393px;
	background:#4f6869;
}
.clock{
	margin-left:428px;
	line-height:19px;
	font-size:11px;
	color:#fff;
}
.tb-end{
	width:1px;
	margin-left:71px;
	background:#aaa;
}

/* things that float over the work area */
.upload{
	position:absolute;
	left:1219px;
	top:31px;
	width:104px;
	height:24px;
	display:flex;
	border-radius:3px;
	overflow:hidden;
}
.up-ico{
	width:30px;
	display:flex;
	align-items:center;
	justify-content:center;
	background:#2a8cf3;
}
.up-txt{
	flex:1;
	text-align:center;
	line-height:24px;
	padding-right:4px;
	color:#3d9fe6;
	background:linear-gradient(90deg,#bfe8fc,#d6f2fe);
}
.ctx{
	position:absolute;
	background:#f1f1f1;
	color:#1c1c1c;
	box-shadow:2px 2px 2px rgba(0,0,0,.45);
}
.main-menu{
	left:481px;
	top:321px;
	width:262px;
	height:406px;
	padding:1px 2px 0 2px;
}
.sub-menu{
	left:737px;
	top:415px;
	width:265px;
	height:203px;
	padding:2px 3px 0;
	border-left:1px solid #e2e2e2;
}
.row{
	height:22px;
	display:flex;
	align-items:center;
	justify-content:space-between;
	position:relative;
}
.main-menu .row{
	padding:0 19px 2px 32px;
}
.sub-menu .row{
	padding:0 18px 2px 31px;
}
.row em{
	color:#1c1c1c;
	letter-spacing:.6px;
}
.row.hi{
	background:#90c8f6;
}
.row.off,.row.off em{
	color:#8a8a8a;
}
.row.sub:after{
	content:"";
	position:absolute;
	right:11px;
	top:8px;
	width:5px;
	height:5px;
	border-top:1px solid #555;
	border-right:1px solid #555;
	transform:rotate(45deg);
}
.row.sub.off:after{
	border-color:#aaa;
}
.ctx hr{
	height:1px;
	border:0;
	margin:3px 2px 3px 29px;
	background:#d6d6d6;
}
```

FILE: mesh.js
```js
var outer = [[592,320],[602,311],[630,299],[658,297],[682,300],[700,303],[715,303],[734,300],[753,297],[780,297],[808,304],[836,322],[855,345],[860,378]];
var cx = 712, cy = 378;
var fr = [0.28,0.385,0.48,0.615,0.72,0.84,0.925,1];
var pts = outer.slice();
// lower half is the upper one flipped
for(var i=outer.length-2;i>=0;i--){
	pts.push([outer[i][0],2*cy-outer[i][1]]);
}
var mesh = document.getElementById('mesh');
function line(list){
	var el = document.createElementNS('http://www.w3.org/2000/svg','polyline');
	el.setAttribute('points',list.join(' '));
	mesh.appendChild(el);
}
function at(p,f){
	var dx = p[0]-cx, dy = p[1]-cy;
	var s = Math.abs(dy)/Math.sqrt(dx*dx+dy*dy);
	var k = 1-(1-f)*(1-0.55*s*s);
	return [(cx+dx*k).toFixed(1),(cy+dy*k).toFixed(1)];
}
for(var r=0;r<fr.length;r++){
	var ring = [];
	for(var j=0;j<pts.length;j++){
		ring.push(at(pts[j],fr[r]));
	}
	line(ring);
}
for(var j=0;j<pts.length;j++){
	line([at(pts[j],0),at(pts[j],1)]);
}
```
